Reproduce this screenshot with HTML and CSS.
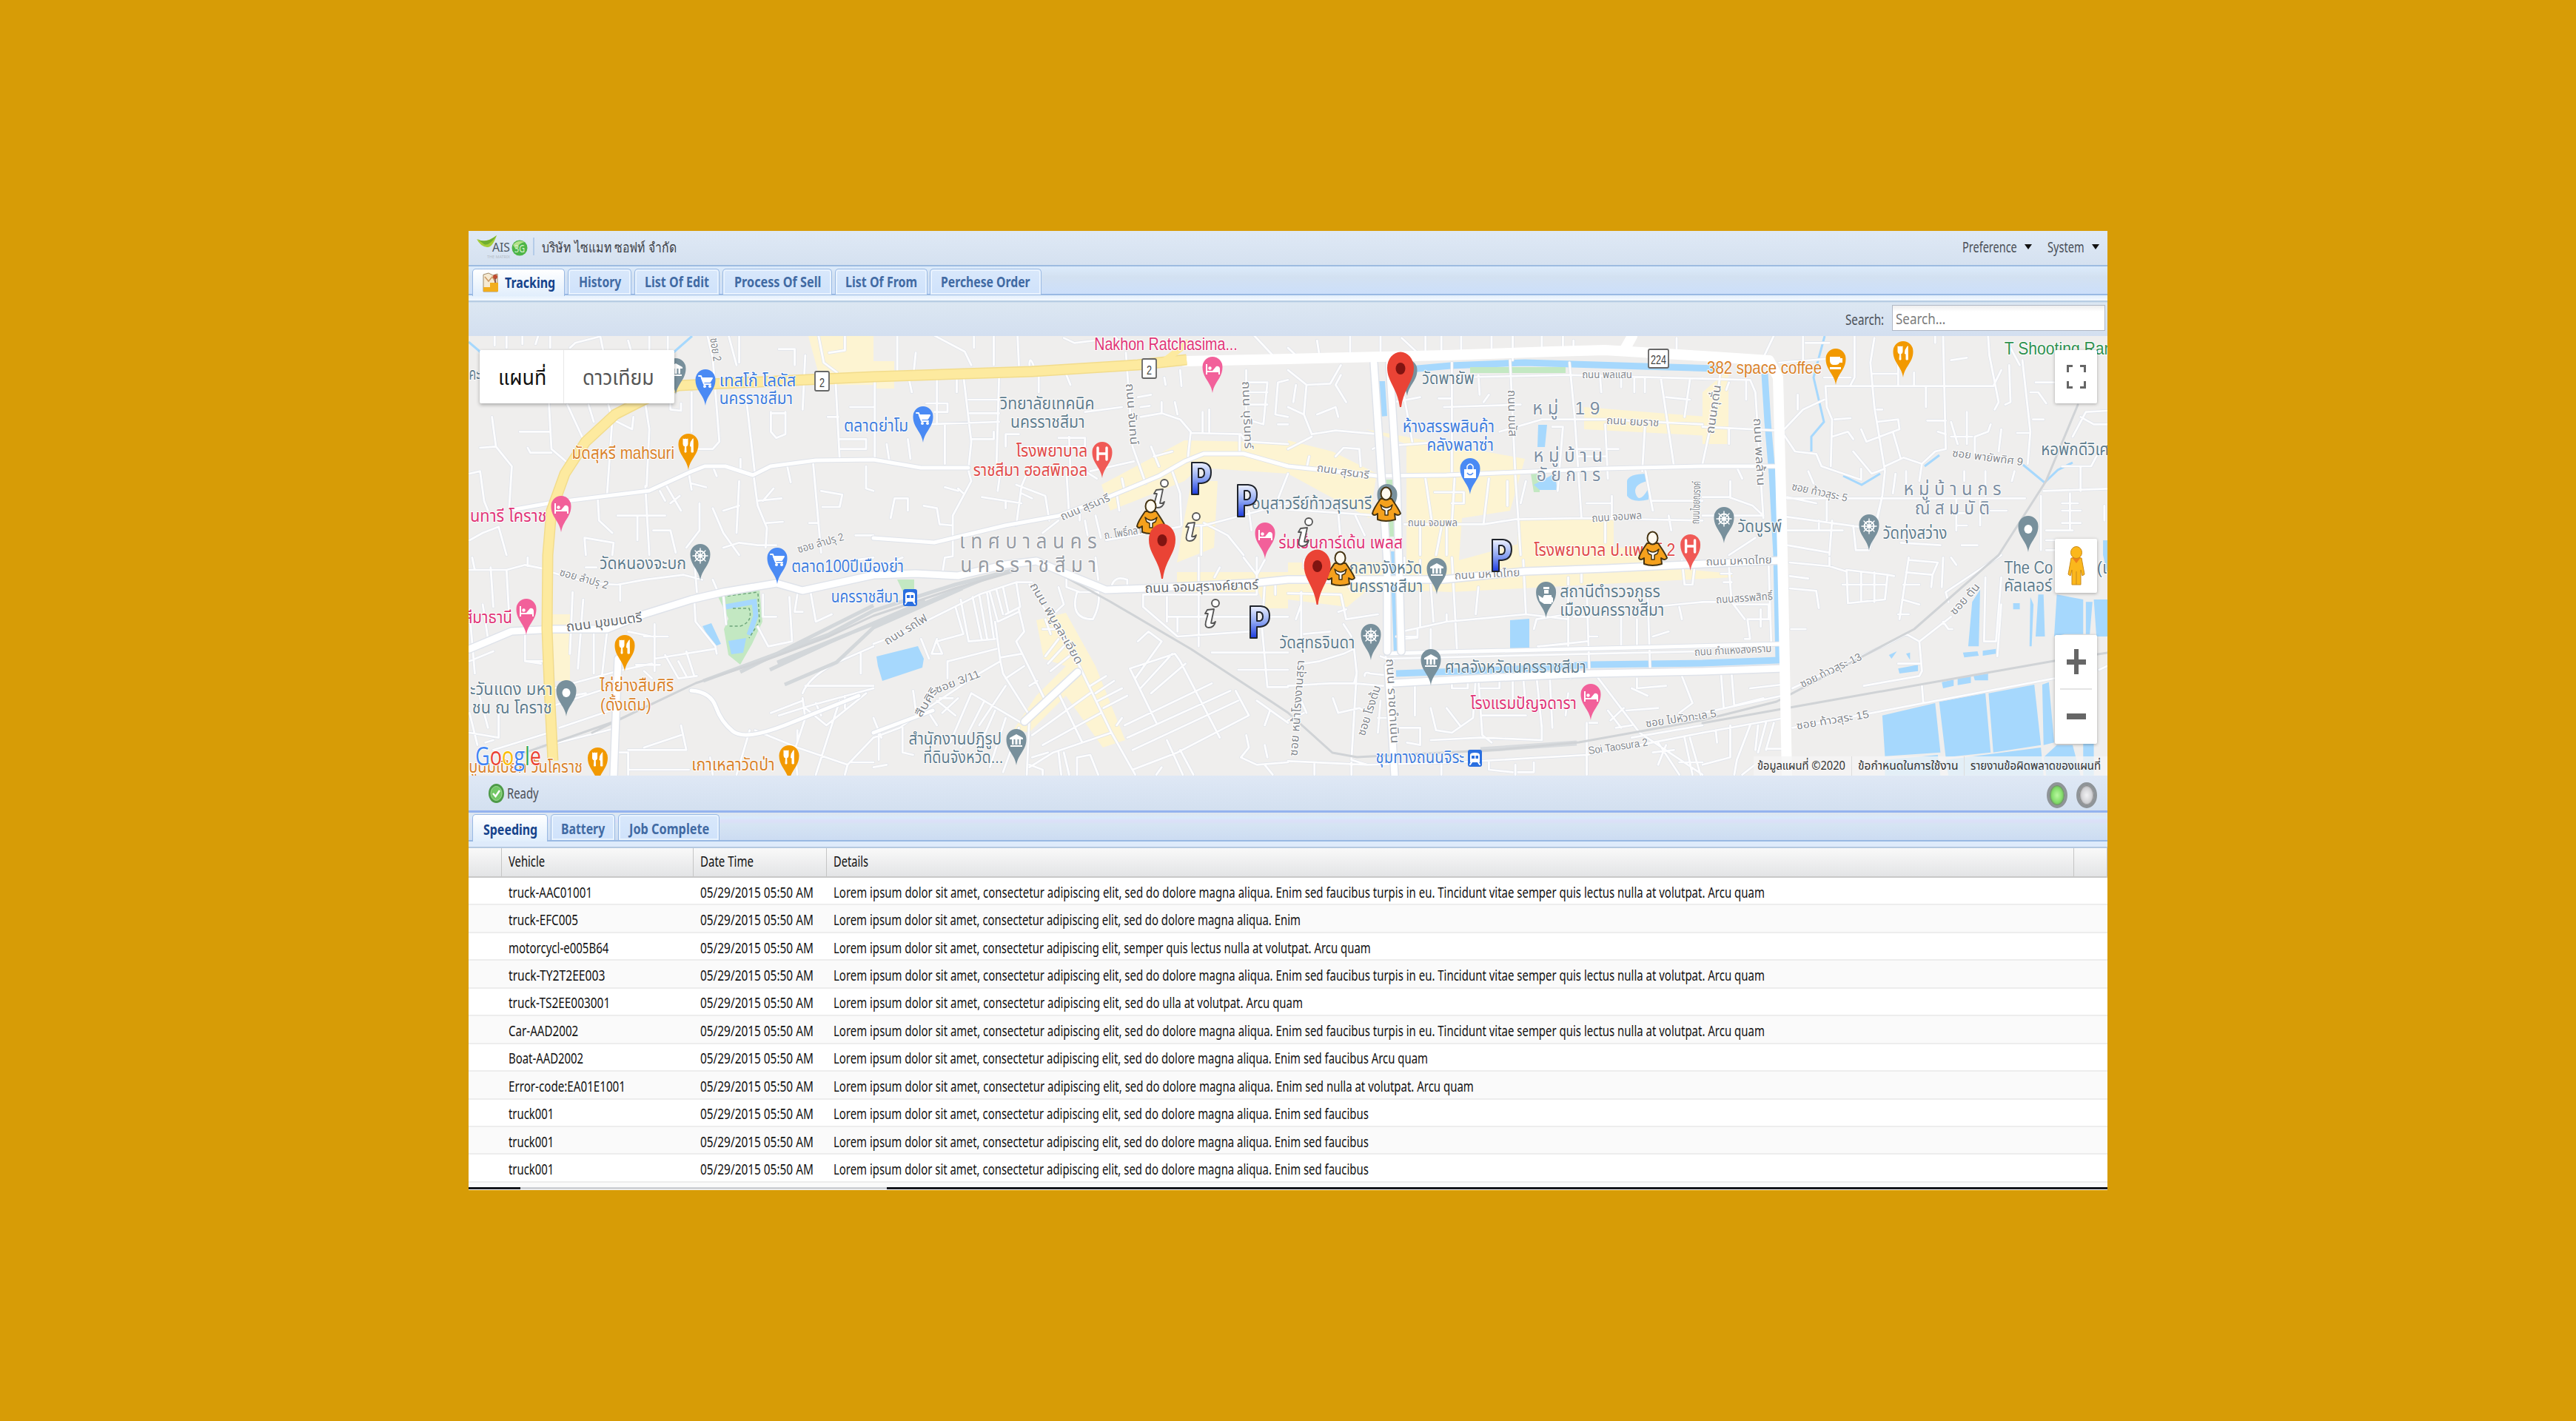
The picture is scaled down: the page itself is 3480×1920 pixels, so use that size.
FILE: index.html
```html
<!DOCTYPE html>
<html lang="th">
<head>
<meta charset="utf-8">
<title>Tracking</title>
<link rel="stylesheet" href="styles.css">
</head>
<body>
<main class="app">
  <header class="topbar">
    <svg class="logo" viewBox="0 0 70 34"><path d="M1 6Q12 13 28 1Q22 18 15 17Q6 16 1 6Z" fill="#a5cd3a"/><path d="M2 6Q14 13 28 1Q18 16 11 13Z" fill="#6fae2f"/><text x="22" y="23" font-size="16" textLength="24" lengthAdjust="spacingAndGlyphs" fill="#4b5560">AIS</text><ellipse cx="59" cy="18" rx="10.5" ry="10.5" fill="#4db548"/><path d="M50 14Q56 6 66 10Q58 11 54 20Z" fill="#b5e08c"/><text x="52" y="24" font-size="14" textLength="14" lengthAdjust="spacingAndGlyphs" fill="#d9f2cf">3G</text><text x="15" y="32" font-size="6" textLength="31" lengthAdjust="spacingAndGlyphs" fill="#b4bcc6">THE MATRIX</text></svg>
    <i class="sep"></i>
    <span class="company" data-w="182">บริษัท ไซแมท ซอฟท์ จำกัด</span>
    <span class="push"></span>
    <span class="menu"><span data-w="74">Preference</span><i class="caret"></i></span>
    <span class="menu"><span data-w="50">System</span><i class="caret"></i></span>
  </header>
  <nav class="tabs main-tabs">
    <a class="tab on t1"><svg class="ticon" viewBox="0 0 22 28"><path d="M1 3L8 1 14 4 20 2V26H1Z" fill="#f6ead2" stroke="#a08a68"/><path d="M1 20H10V14H21V26H1Z" fill="#f2ae1c"/><path d="M3 6L8 12 13 6 18 14" fill="none" stroke="#cc9a66" stroke-width="1.5"/><circle cx="17" cy="6" r="3" fill="#bf4b30"/><path d="M17 8V14" stroke="#744" stroke-width="1.5"/></svg><span data-w="68">Tracking</span></a>
    <a class="tab t2"><span data-w="57">History</span></a>
    <a class="tab t3"><span data-w="87">List Of Edit</span></a>
    <a class="tab t4"><span data-w="117">Process Of Sell</span></a>
    <a class="tab t5"><span data-w="97">List Of From</span></a>
    <a class="tab t6"><span data-w="121">Perchese Order</span></a>
  </nav>
  <div class="searchbar"><span data-w="52">Search:</span><div class="input"><span data-w="67">Search...</span></div></div>

  <section class="map">
  <svg class="canvas" viewBox="633 454 2214 594" preserveAspectRatio="none">
    <defs>
      <linearGradient id="pg" x1="0" y1="0" x2="0" y2="1"><stop offset="0" stop-color="#eef2ff"/><stop offset=".5" stop-color="#8ea6f2"/><stop offset="1" stop-color="#1c3be0"/></linearGradient>
      <path id="drop" d="M0 0C-2-15-13.5-20-13.5-35A13.5 14 0 0 1 13.5-35C13.5-20 2-15 0 0Z"/>
      <g id="bed" fill="#fff"><path d="M-9-39V-25H-7V-28H8V-25H10V-33Q9-37 5-36L0-30H-7V-39Z"/><circle cx="-3.500" cy="-33.500" r="2.200"/></g>
      <g id="fork"><path d="M-7-42V-35Q-7-32-4.500-32L-5-24H-3L-3.300-32Q-1-32-1-35V-42M-4-42V-34M6-42Q2-38 2.500-32H4V-24H6Z" fill="#fff" stroke="#fff" stroke-width="1"/></g>
      <g id="cart" fill="none" stroke="#fff" stroke-width="2"><path d="M-9-40H-6L-2-29H7"/><path d="M-5-37H9L6-32H-3Z" fill="#fff"/><circle cx="-1" cy="-26" r="1"/><circle cx="6" cy="-26" r="1"/></g>
      <g id="wheel" fill="none" stroke="#fff"><circle cy="-33" r="6.500" stroke-width="2"/><circle cy="-33" r="2" stroke-width="1.500"/><path d="M0-43V-23M-10-33H10M-7-40L7-26M7-40L-7-26" stroke-width="1.400"/></g>
      <g id="museum" fill="#fff"><path d="M-9-37L0-42 9-37V-35H-9ZM-8-27H8V-25H-8Z"/><path d="M-6-35H-3.500V-28H-6ZM-1.500-35H1.500V-28H-1.500ZM3.500-35H6V-28H3.500Z"/></g>
      <g id="aitch"><path d="M-6-41V-25M6-41V-25M-6-33H6" stroke="#fff" stroke-width="3.400"/></g>
      <g id="red"><path d="M-1 0C-4-25-18-34-18-53A18 21.500 0 0 1 18-53C18-34 4-25 1 0Z" fill="#ea4335"/><ellipse cy="-52" rx="6.500" ry="8" fill="#811411"/></g>
      <path id="pee" d="M2 2H16Q28 3 28 15 28 29 15 30H11V45H2ZM11 10V22H15Q19 21 19 16 19 11 15 10Z" fill="url(#pg)" fill-rule="evenodd" stroke="#20242c" stroke-width="2"/>
      <g id="eye" fill="#fff" stroke="#555" stroke-width="1.800"><path d="M6 15L15 14 11 33Q14 34 17 31 15 39 8 39 2 39 4 31L7 20H3Z"/><circle cx="17" cy="6" r="5"/></g>
      <g id="man" stroke="#463412" stroke-width="2"><path d="M12 17H27Q38 33 39 37 36 41 31 37L32 45Q19 49 8 45L8 37Q3 41 1 37 2 31 12 17Z" fill="#f5a11d"/><path d="M12 25Q20 33 28 25L26 31 22 33V39H18V33L14 31Z" fill="#fff" stroke-width="1.500"/><ellipse cx="19.500" cy="10" rx="7" ry="8.500" fill="#fffaf0"/></g>
      <g id="train"><rect x="0" y="0" width="19" height="23" rx="3" fill="#2a6fe0"/><path d="M3 7Q3 4 9.500 4T16 7V17H3Z" fill="#fff"/><path d="M5 8H9V12H5ZM10.500 8H14V12H10.500Z" fill="#2a6fe0"/><path d="M5 17L3 20M14 17L16 20" stroke="#fff" stroke-width="2"/></g>

      <g id="minor" fill="none">
        <g transform="translate(620 450) scale(.35714 .33333)"><path d="M135 10V50M180 10V60M240 10V45M300 10L290 45M345 10V60M440 40L530 15M440 40L420 60M535 15L545 68M640 30L650 68M720 10V68M790 10V68M940 10L960 100 985 440 960 470 905 470M1020 10L1050 130M1060 10V120M1085 250L1120 575M1180 320V400L1200 425 1235 410V320M1180 325H1235M1310 90L1300 310M1360 10L1380 120 1430 160M1425 200L1440 510M1395 340H1435M1440 430H1540V470H1440M880 240V400M800 285V310L840 315V285M125 340L140 460 200 540 190 710M80 465L140 460M340 280L350 470 410 525M230 400H345M260 465L270 485H350M410 290L470 430M490 290L510 360M565 290L580 350 655 390 660 340M580 350L560 660M705 285L720 390 710 620M705 620L720 900M40 570L80 560 95 680 110 720M40 840L90 810 150 785 180 900M525 670L530 760 580 810M600 740H780M675 740V840M480 900L475 830 585 850 580 900M760 640L780 680M780 610L840 720M800 690L835 660M735 800H800L820 890M910 690V800L860 870M960 710L1000 810 1060 900M1060 600L1050 810M1000 720L1060 700M1115 580L1130 700 1165 790 1160 870M1130 680L1220 670M1190 630L1150 680M1165 770L1225 765M1340 530L1370 890M1370 640L1450 655 1440 705H1375M1325 770H1360M870 570L880 635M880 610L935 625M960 540L975 580M1240 530L1255 605M1065 510V560M1130 860L1060 850 1000 870M1540 540V630L1568 640M1460 10V70L1400 80M1210 65H1270V130M1480 300H1568M1130 860H1200M1500 820H1568"/></g>
        <g transform="translate(1180 450) scale(.35714 .33333)"><path d="M90 10V180M230 10L345 75 370 130M160 80L150 180M135 190L145 240M5 200V510M240 190V370M340 170L370 440 360 545M475 180L465 545M190 370L475 360M360 270H475M365 325H475M370 430H455V400M200 285H280V320H230M50 450L60 520M130 430L140 510M270 370V530M315 190V240M625 170V240M730 170L745 210M380 10V60M455 10V130M545 10L550 130M590 130Q590 90 605 130M720 20L760 40 840 30M910 10L950 60M955 80L980 460 1030 610M1010 340L1090 325 1160 350 1200 400 1190 500M1200 405L1390 410 1410 440 1568 450M1090 325V280M1150 330L1140 280M1000 260L1050 250M1010 300L1045 295M1245 320V400M1270 310V400M1385 410V490M1410 150V350L1475 370 1490 200H1410M1410 240H1490M1410 290H1490M1440 10L1510 90M1568 190L1530 200 1520 330 1568 340M1100 180L1105 210M1160 150L1165 215M800 320L940 300M500 460V410H550M700 425H800V460H560M730 560L740 740M740 420L745 560M580 570L560 620 540 780M540 615L650 660 665 760M560 650L600 670M480 560L470 640M800 560L845 590M820 560L985 520M1060 500L1130 480M1050 460L1080 540M360 560L370 600 300 740 300 900M270 625L320 640M320 630L340 650M190 700L240 710 250 775 300 780M410 665L560 690M500 680V710M65 750L80 670H130V720M640 810L700 760M780 710V760M840 740L860 830M1130 560L1160 650 1165 780M1200 780H1250L1568 690M1240 780V900M1250 770L1340 820 1400 900M880 840L1160 785M920 650L930 720M1080 740L1100 900M940 590L950 640M1568 570L1520 700M1420 720L1430 800M800 760L810 820M1530 370H1568"/></g>
        <g transform="translate(1740 450) scale(.35714 .33333)"><path d="M110 30L120 100M235 10V80M0 60L30 90M350 10V90M430 20L490 80M520 10V80M580 10V80M655 10V80M770 10V80M850 10V110M960 10V60M1040 10V60M1080 30V60M1470 20V90M0 150L70 210 160 205 200 130M70 210L60 330 90 410 180 395 340 410M0 300L60 330M200 170L180 210 220 280M110 330L180 300 190 340M30 210L20 280M0 470L90 420M80 500L70 550M180 500L210 465 270 470 275 540M620 120V580M620 180L1060 170 1568 185M720 170L725 250M760 250L740 280M840 110L860 580 880 900M1065 120L1085 350M590 300L880 290M570 265H620M500 260L400 280M440 260L470 440M410 455L600 440M800 400L960 350 1200 350 1568 370M1180 170L1185 240M1260 170V220M1310 180V240M1350 180V240M1410 180L1460 540M1430 260L1520 270M1085 350L1110 750M1200 370L1210 590M1350 380L1340 560M1520 190L1500 340M1000 380H1040L1020 640M1090 470H1180M1210 470H1250M1350 545L1380 720M520 590L545 770M555 645H665V690H620M760 590L740 770M630 590L620 770M830 600V700M880 690L900 600M1130 690H1220M1225 660V750M1380 680H1568M440 775L740 775 860 755 1110 750 1568 760M190 730L200 850M0 715L340 740M255 740L290 820M500 780V900M580 790L560 900M1200 750V850M1440 740L1450 800M600 780V900M320 470L340 460M1100 500H1200"/></g>
        <g transform="translate(2300 450) scale(.35714 .33333)"><path d="M0 185L180 190 200 240 230 750M0 380L280 395M100 200L90 230M165 190V270M100 390V450M70 130L60 230 0 530M130 545L150 590M0 665H100L190 700 230 740H0M105 600V665M230 100L270 10M290 120L520 100M380 10V120M390 40H480M575 10V180L560 210M460 180H560M650 20L635 120 650 300 690 560 680 660 630 880M640 215H1100M465 215H640M465 215L470 300 490 350 485 540M460 270L380 310 300 400 350 480 430 490 450 540 600 595M600 595V550M740 120V210M800 160V210M640 165H740M845 215V300M910 10L920 470M850 355H920M890 400L920 410M1080 10L1085 90 1120 280 1105 310M1100 215L1130 150M1160 130L1165 280 1145 290M1210 110L1240 400 1230 530M1240 240H1270L1300 285M1260 200H1330M360 250V310M500 350L560 345M490 420L550 400 570 430M660 310H680M660 360L740 350 745 390 620 440 600 390M720 400L750 510M690 540L760 505 830 530 880 480 920 470M830 530L820 600M570 480L640 570 690 550M1000 320V450M940 360L965 450M940 420H1020M1090 370L1080 400 1030 420V500M1130 390L1120 480M1250 350H1290M1190 405H1240M320 670H1220M320 665L430 690M470 680V760M680 660L660 760M320 745L590 785M320 800H530M320 860L480 890M490 760L480 900M570 780L580 880H630M730 570L720 650M770 560V640M400 560L420 610M100 900L200 830M960 670V800M950 730H1010M990 560V600M1070 560V660M1090 720H1150M1050 680V780M960 780H1000M980 860H1040M750 850L900 860M1290 640L1568 630M1280 660V880M1390 650V800M1360 720H1430M1360 770H1430M1360 690H1420M1300 800H1400M1300 840H1400M1300 880H1400M1400 420L1450 320 1532 315M1430 340L1480 370H1530M1360 540L1470 540 1500 480M940 110L1000 100M1160 50L1200 130M1180 560L1170 600M440 760V800M880 10V40M1430 540V640M1520 700V760"/></g>
        <g transform="translate(620 750) scale(.35714 .33333)"><path d="M40 60H180L250 40 320 55M50 10L60 60M180 60L190 250M120 50L130 210M260 10V45M350 70L500 115 600 120 700 100 850 80 920 100M610 120V185M890 10L900 150M960 100L980 150M40 230L60 480M90 200L110 340M250 310V430L310 440M40 430L130 390M330 430H250M430 150L420 400M470 180L450 460M510 320V480M560 310L540 500M360 540L600 470 730 440M640 310L730 330M740 280V470M700 330H790M740 420L970 380M670 445H760M780 405L830 500 900 490M860 390L890 490M830 430L860 490M890 180L895 270 970 370 975 400M1000 160L1010 280M1150 160V250H1200M1250 170L1260 350 1170 370 1130 290M1280 160L1270 230H1300M1330 150L1350 270 1410 240M360 610L560 540M380 700L600 620M130 790L340 720M300 780L600 700M100 760L130 750M40 640L70 770M75 560L110 700M640 790H860L840 690M600 800H640V890M700 780L840 730M640 870H870M1100 710L1050 890M1120 710L1280 780 1470 850 1568 740M1470 850L1460 890M1300 580L1310 660 1270 790 1280 890M1310 620L1390 690 1540 560M1440 590L1350 890M1180 640L1300 590M1210 650L1330 610 1568 540M1300 560Q1320 500 1420 440L1568 370M1280 710V760M1500 20L1568 10M1480 840H1568M1460 570V620M1350 600L1370 650M950 820L960 890M1310 530H1568M1520 400V480M380 580L480 560M150 600V740L40 720M700 470L730 500M480 50H520"/></g>
        <g transform="translate(1180 750) scale(.35714 .33333)"><path d="M0 60L110 10M260 80L270 10 300 5M0 360L100 320 400 160 540 110 600 110M540 110L555 210 500 240M330 180L360 350 460 340M375 170L410 345M400 160L430 340M430 155L455 335M310 210L340 320 240 350 260 400H220L240 340M180 340L210 420M440 150L470 270M465 140L490 240M490 130L510 230M470 270L550 230M0 740L100 700 150 660 400 480 480 430M285 430L465 380M280 430V500M150 550L160 630M460 270L480 430 490 480 590 650M550 220L570 310 540 350 650 590M480 415L560 400M500 500L570 450M590 530L620 510M110 700V800L150 810M210 640L240 690M20 720L20 830M0 660L30 740M240 590L310 650M260 640L320 580M370 560L290 760M370 560L560 680M500 530L400 690M420 590L330 780M460 630L390 800M250 580H300M500 660L440 860M550 700L490 880M700 130L720 200 690 230M770 150Q740 260 830 260 860 200 850 150ZM730 90V130L780 150M590 120L770 430 900 720 990 890M650 260L670 320M640 300H700M650 410L700 340M660 440L720 370M670 470L740 410M700 560L790 760M600 730L820 560M640 770L860 640M590 860L680 800 900 720M650 590L590 650 580 890M820 530L880 490M840 560L910 510M850 590L940 540M870 620L960 570M920 690L940 660M970 460L1070 680M970 460L1140 400 1160 430 1310 740M1090 350L1040 310 1000 350M1050 560L1180 440M1010 540L1130 400M990 500L1090 350M950 690L1280 520M960 740L1350 550M980 790L1380 590M1370 550L1420 650 1150 800 980 870M1110 750L1170 890M1160 790L1210 890M1020 210V160H1450V10M1020 210L1150 330 1420 310M1110 250H1420M1110 170V270M1150 250V310M1230 10V370M1280 395H1568M1380 465H1568M1480 110L1470 300 1490 535H1568M1568 250H1490M900 130Q910 80 960 100V130M840 10L850 100M1390 820L1450 850 1568 840M1410 730L1420 780 1390 820M1480 770L1490 820M1450 590L1568 680M1500 630L1480 690M770 890V820L820 810 850 890M720 800L740 890M700 800L710 890M590 850L640 870V890M1480 850L1510 890M1520 120V160M1310 50L1290 90M1400 10L1450 80 1480 20M0 860L50 850M660 800L600 820M1070 890L1090 860"/></g>
        <g transform="translate(1740 750) scale(.35714 .33333)"><path d="M0 155L200 160 220 260 340 240M50 150V380M30 260L50 200M60 20V50M120 430L210 400 250 380M60 440L120 430M210 280L240 330M250 380L260 480 250 520 360 530M0 530L160 520 250 520M60 320L160 310M290 490Q290 470 310 480L400 490M350 410L400 430M370 190V420L1140 400 1568 390M410 330H490V300M500 20V290M540 120L550 270M430 310L600 270 900 240 1060 260M540 300V400M620 10L640 400M435 310V340L490 335M720 130L710 240M600 240V270M890 20L900 240M1060 160V370M1080 250H1140M945 370L1060 360M930 300L940 260 1060 240M1130 140L1140 480M1260 240V380M1320 260V380M1360 150L1370 470M1380 330L1440 310M1140 330H1170M950 390V370L1130 350M1490 20L1500 120H1530L1540 30M1380 210L1568 190M1480 210L1490 260M1060 90V120M1110 70V110M440 10V120M230 130L250 100M190 230L220 220M260 470L240 830M480 520V650M350 590L340 720M340 660H400M170 580L190 640 270 620 300 640M540 620L560 710 620 720 700 660 710 500M600 620L650 690M540 750L730 740 960 750V690M720 500L735 730 770 760M735 650H900M800 500V540M850 500V600M890 500L900 620M940 490L960 700M990 490L1000 700M1040 490L1070 500M1060 560L1050 650M620 510V540H680V510M730 540H800V510M1160 480L1330 720 1568 890M1130 680V890M1140 680H1170M1210 630L1260 700M1270 620L1220 670M1240 700L1300 690M1280 630L1400 620M1490 490L1530 600 1480 640M1320 500V540L1430 530M1300 540L1360 570M1400 760L1480 890M1380 800L1460 790M1430 770L1400 850M240 830L300 850 0 835M100 840V890M240 840V890M300 850L640 840 1130 810 1330 770 1568 720M580 850V890M760 840V870L850 880M860 850V890M930 840V880H870M420 700H500V770L450 760M1500 740L1530 890M1520 740L1560 890M0 670L60 640M50 590L70 640M1300 740L1568 690M400 800V890M1480 840H1568"/></g>
        <g transform="translate(2300 750) scale(.35714 .33333)"><path d="M0 190H50M100 50L110 190 160 260M70 75H110M80 110H110M120 200L180 200H250V260H170L180 340H160M220 220V290M250 40L260 360M330 30L480 45 540 65M480 45V10M545 60L700 80 690 180 550 195ZM530 120H690M600 70V190M650 70V190M700 80L725 85M330 85L400 95M330 135L430 145 440 215M335 300L390 300M780 10L745 260M760 120H820M755 180L820 200M740 240H780M780 20L890 30 870 80 770 70M870 80L865 130M910 10L905 130M940 10L960 40M770 320L820 350 830 470 820 490 610 530M820 350L940 250M910 270L930 300H945M1070 90L1065 350H1110L1130 90M1130 200L1115 410M920 150L1130 0M340 540L700 360 770 320M340 700L640 640 1330 500M740 440H820M830 530L835 600M0 470L300 460M70 480L80 620M110 480L120 610M180 540L300 525M120 610L230 580M0 720L310 660M50 710L55 760M105 690V820L0 850M180 690L130 830 120 890M210 690L200 790M240 680L210 800M270 680L240 790M240 785H310M1530 450L1500 465M210 840L150 890M0 640L300 570M920 150L930 190"/></g>
      </g>
      <g id="major" fill="none" stroke-linejoin="round">
        <path d="M691 689L741 680 820 670 877 663 934 637 952 630 980 630 1017 642 1041 630 1102 622 1180 621 1244 632 1308 632"/>
        <path d="M1180 727L1262 733 1358 710 1430 697 1501 670 1566 643 1601 623 1626 613 1680 613 1740 630 1861 643 1954 642 2047 638 2169 633 2300 630 2398 630"/>
        <path d="M934 933Q960 935 967 955T990 988 1060 980L1160 940M1180 990L1260 960M1873 883L2409 870"/>
      </g>
      <g id="big" fill="none" stroke-linejoin="round">
        <path d="M634 877L691 853 749 850 820 850 870 830 934 810 977 800 1049 788 1084 798 1180 777 1237 775 1294 778 1358 763 1400 758 1440 775 1494 797 1548 795 1701 787 1740 783 1950 783 2060 772 2170 768 2300 762 2409 757"/>
        <path d="M1856 490L1866 640 1874 760 1874 880M1877 490L1887 650 1893 880M1875 900L1884 1048M1883 923L1990 917 2150 910 2300 907 2409 903M835 890L829 1048M1384 975L1456 908"/>
      </g>
      <path id="white" fill="none" stroke-linejoin="round" d="M1600 488L1740 485 1954 480 2097 475 2168 473 2300 481 2390 487 2402 510 2408 750 2414 1048M2195 472L2205 454"/>
      <path id="rail" fill="none" d="M800 990L940 923 1031 893 1120 860 1180 832 1290 795 1370 772M1440 780L1500 813 1609 877 1716 947 1740 963 1800 1017 1833 1023 2025 1013 2133 1003 2300 973 2400 948 2586 850 2700 750 2764 650 2807 547M2300 977L2480 945 2775 893 2860 880M700 1020L830 975 940 923"/>
    </defs>
    <rect x="633" y="454" width="2214" height="594" fill="#efeeed"/>
    <g fill="#fdf4d2">
      <path d="M1092 454H1180V520H1110ZM1180 488H1208V525H1180ZM1488 655L1600 595 1740 598V640L1620 632 1600 650 1500 690ZM1610 650H1645L1640 740 1590 760 1600 700ZM1845 580L2060 620 2040 690 1975 700 1970 770 1900 780V600ZM1740 595L1800 610 1860 640 1850 700 1740 640ZM2140 550L2330 565V590L2140 580ZM1740 760H1960L2180 700V760L2340 775V780L1960 800 1850 795 1820 820 1740 810ZM1590 773H1740V800H1590ZM1400 838L1440 828 1480 900 1520 1000 1490 1010 1440 940 1390 990 1370 985 1400 940 1440 900 1410 890ZM2300 530L2335 500V600H2300ZM745 830H770V920H750ZM1700 800H1740V822H1710Z"/>
      <path d="M2050 700H2170V740H2230V770H2050Z"/>
    </g>
    <g fill="#c3e8c2">
      <path d="M970 806L1026 796 1030 840 1016 870 1000 898 984 885 978 850 984 836ZM1212 783H1235V800H1220ZM1868 648H1882L1884 725H1872ZM2068 640H2080V665H2072Z"/>
    </g>
    <path d="M980 820L1019 813 1021 832 1012 858" fill="none" stroke="#a6d8fd" stroke-width="7"/>
    <g fill="#a6d8fd">
      <path d="M984 866L1008 862 1004 882 988 884ZM949 846L961 842 974 870 964 874ZM1184 887L1240 873 1248 890 1246 902 1192 920 1186 900ZM1862 515H1871L1874 562 1864 563ZM2078 574H2090L2087 604H2077ZM2072 655L2100 640 2104 662H2080ZM2040 838L2066 836V878L2040 879ZM1878 745H1884L1889 880 1883 885Z"/>
      <path d="M2198 650Q2200 640 2225 640V650Q2205 655 2210 668T2227 660V675Q2205 680 2198 670Z"/>
      <g transform="translate(2300 750) scale(.35714 .33333)"><path d="M680 650L880 600 900 800 690 815ZM895 595L1070 560 1090 800 920 820ZM1082 560L1255 525 1280 770 1100 800ZM1285 525L1310 515 1330 760 1290 770ZM690 830L890 810 900 893H690ZM920 830L1280 780 1290 893H930ZM1290 820L1340 770H1400L1430 893H1300ZM1440 760H1480V893H1440ZM1020 190L1050 140 1045 370H1005ZM1175 195H1200V220H1175ZM1240 170L1252 200 1245 370H1237ZM1270 160H1290L1295 330H1260ZM1340 160L1440 180V320H1370L1330 330ZM1450 190H1475L1465 320H1450ZM1480 180H1532V330H1490ZM985 395L1040 390 1045 408 990 415ZM1060 388L1110 380V400L1060 408ZM905 515L950 505V530L910 540ZM965 500L1015 492V518L965 527ZM1025 490L1080 480V508H1030ZM740 460L815 445V470L745 480ZM705 405L735 390 715 420ZM770 400L785 395V425ZM1465 0V-40H1490V0ZM1515 0V-60H1532V80Z"/></g>
    </g>
    <path d="M1893 500L1960 494 2060 490 2220 495 2320 498M1886 910L2030 905 2150 898 2300 896 2403 892 2402 850 2400 750 2394 640 2388 570 2384 505" fill="none" stroke="#a6d8fd" stroke-width="9"/>
    <path d="M1986 500H2115" stroke="#c3e8c2" stroke-width="8"/>
    <path d="M633 462L660 485M910 476L935 454M2465 454L2450 510 2464 570 2447 590V610M2490 643L2515 655 2540 640M2600 630L2620 615M2733 628L2762 652 2780 635 2800 625" fill="none" stroke="#a6d8fd" stroke-width="3"/>
    <path d="M976 806L1024 800M990 822H1012Q1018 840 1000 846H985M1024 802L1026 840 1012 862" fill="none" stroke="#6fa57c" stroke-width="1.500" stroke-dasharray="4 3"/>
    <use href="#minor" stroke="#dfe3ea" stroke-width="12"/>
    <use href="#minor" stroke="#fdfdfe" stroke-width="8"/>
    <use href="#major" stroke="#dfe3ea" stroke-width="7"/>
    <use href="#major" stroke="#fff" stroke-width="5"/>
    <path d="M950 920L1031 890 1120 857 1180 825 1290 790 1370 770M1040 905L1120 868 1180 842 1250 812M1000 908L1180 818M1060 925L1130 895 1180 848 1300 795M1050 895L1200 835 1340 778" fill="none" stroke="#d3d7da" stroke-width="5"/>
    <path d="M2000 1013L2130 1004" stroke="#d8dbde" stroke-width="7"/>
    <use href="#rail" stroke="#d0d3d6" stroke-width="3"/>
    <use href="#big" stroke="#dfe3ea" stroke-width="12"/>
    <use href="#big" stroke="#fff" stroke-width="9"/>
    <use href="#white" stroke="#fff" stroke-width="14"/>
    <g fill="none" stroke-linejoin="round"><path d="M747 1028L743 950 739 850 740 750 745 690 763 640 791 597 831 560 870 540 916 521 1091 513 1180 509 1394 502 1537 493 1603 486" stroke="#f2dc8c" stroke-width="15"/><path d="M747 1028L743 950 739 850 740 750 745 690 763 640 791 597 831 560 870 540 916 521 1091 513 1180 509 1394 502 1537 493 1603 486" stroke="#fdea9f" stroke-width="12"/><path d="M1570 490L1606 462" stroke="#fdea9f" stroke-width="9"/></g>

    <g fill="#78909c"><use href="#drop" x="913" y="533"/><use href="#drop" x="1901" y="535"/><use href="#drop" x="1874" y="703"/><use href="#drop" x="2329" y="734"/><use href="#drop" x="2525" y="744"/><use href="#drop" x="2740" y="746"/><use href="#drop" x="946" y="784"/><use href="#drop" x="765" y="968"/><use href="#drop" x="1373" y="1034"/><use href="#drop" x="1941" y="803"/><use href="#drop" x="2088.600" y="835"/><use href="#drop" x="1852" y="892"/><use href="#drop" x="1933" y="926"/></g>
    <g fill="#f2609a"><use href="#drop" x="758" y="719"/><use href="#drop" x="1638" y="531"/><use href="#drop" x="1709" y="755"/><use href="#drop" x="711" y="858"/><use href="#drop" x="2149" y="973"/></g>
    <g fill="#f29900"><use href="#drop" x="930" y="635"/><use href="#drop" x="2480" y="520"/><use href="#drop" x="2571" y="510"/><use href="#drop" x="844" y="907"/><use href="#drop" x="807.500" y="1059"/><use href="#drop" x="1066" y="1056"/></g>
    <g fill="#4a8af4"><use href="#drop" x="953" y="548"/><use href="#drop" x="1247" y="598"/><use href="#drop" x="1986" y="668"/><use href="#drop" x="1050" y="789"/></g>
    <g fill="#f05a56"><use href="#drop" x="1489" y="646"/><use href="#drop" x="2283.600" y="771"/></g>
    <use href="#bed" x="758" y="719"/><use href="#bed" x="1638" y="531"/><use href="#bed" x="1709" y="755"/><use href="#bed" x="711" y="858"/><use href="#bed" x="2149" y="973"/>
    <use href="#fork" x="930" y="635"/><use href="#fork" x="2571" y="510"/><use href="#fork" x="844" y="907"/><use href="#fork" x="807.500" y="1059"/><use href="#fork" x="1066" y="1056"/>
    <use href="#cart" x="953" y="548"/><use href="#cart" x="1247" y="598"/><use href="#cart" x="1050" y="789"/>
    <use href="#wheel" x="2329" y="734"/><use href="#wheel" x="2525" y="744"/><use href="#wheel" x="946" y="784"/><use href="#wheel" x="1852" y="892"/>
    <use href="#museum" x="913" y="533"/><use href="#museum" x="1373" y="1034"/><use href="#museum" x="1941" y="803"/><use href="#museum" x="1933" y="926"/>
    <use href="#aitch" x="1489" y="646"/><use href="#aitch" x="2283.600" y="771"/>
    <g fill="#fff"><ellipse cx="2740" cy="715" rx="5.500" ry="6"/><ellipse cx="765" cy="936" rx="5.500" ry="6"/><path d="M1978 634H1994V646H1978Z"/><path d="M2472 482H2486V484H2489V490H2485Q2484 493 2480 493H2476Q2472 492 2472 487ZM2472 496H2487V499H2472Z"/><path d="M2085 793H2093V796H2085ZM2086 797H2092V802H2086ZM2078 804L2084 808 2086 804H2096V816H2086L2080 812ZM2098 808V814H2096V806Z"/></g>
    <path d="M1982 635V630Q1986 624 1990 630V635" fill="none" stroke="#fff" stroke-width="1.500"/><path d="M1982 639Q1986 644 1990 639" fill="none" stroke="#4a8af4" stroke-width="1.500"/>

    <g class="lbl" transform="translate(620 450) scale(.35714 .33333)">
      <text x="38" y="190" textLength="42" class="g">คะ</text>
      <text x="985" y="215" textLength="290" class="b">เทสโก้ โลตัส</text><text x="985" y="288" textLength="278" class="b">นครราชสีมา</text>
      <text x="1456" y="400" textLength="244" class="b">ตลาดย่าโม</text>
      <text x="427" y="510" textLength="388" class="o">มัดสุหรี mahsuri</text>
      <text x="42" y="765" textLength="290" class="p">นทารี โคราช</text>
      <text x="950" y="22" textLength="95" class="r" transform="rotate(82 950 22)">ซอย 2</text>
      <text x="1285" y="892" textLength="182" class="r" transform="rotate(-17 1285 892)">ซอย ลำปรุ 2</text>
    </g>
    <g class="lbl" transform="translate(1180 450) scale(.35714 .33333)">
      <text x="835" y="70" textLength="542" class="p">Nakhon Ratchasima...</text>
      <text x="478" y="308" textLength="358" class="g">วิทยาลัยเทคนิค</text><text x="518" y="385" textLength="282" class="g">นครราชสีมา</text>
      <text x="540" y="500" textLength="270" class="d">โรงพยาบาล</text><text x="377" y="578" textLength="433" class="d">ราชสีมา ฮอสพิทอล</text>
      <text x="1430" y="713" textLength="455" class="g">อนุสาวรีย์ท้าวสุรนารี</text>
      <text x="1532" y="872" textLength="470" class="p">ร่มเย็นการ์เด้น เพลส</text>
      <text x="325" y="872" textLength="520" class="c">เ ท ศ บ า ล น ค ร</text><text x="328" y="968" textLength="515" class="c">น ค ร ร า ช สี ม า</text>
      <text x="715" y="760" textLength="200" class="r" transform="rotate(-24 715 760)">ถนน สุรนารี</text>
      <text x="875" y="835" textLength="160" class="r" transform="rotate(-9 875 835)">ถ. โพธิ์กลาง</text>
      <text x="955" y="205" textLength="250" class="r" transform="rotate(86 955 205)">ถนน จันทน์</text>
      <text x="1395" y="195" textLength="275" class="r" transform="rotate(88 1395 195)">ถนน บุรินทร์</text>
    </g>
    <g class="lbl" transform="translate(1740 450) scale(.35714 .33333)">
      <text x="507" y="208" textLength="198" class="g">วัดพายัพ</text>
      <text x="433" y="402" textLength="348" class="b">ห้างสรรพสินค้า</text><text x="525" y="478" textLength="253" class="b">คลังพลาซ่า</text>
      <text x="925" y="330" textLength="98" class="v">ห มู่</text><text x="1085" y="330" textLength="95" class="v">1 9</text><text x="928" y="521" textLength="262" class="v">ห มู่ บ้ า น</text><text x="940" y="600" textLength="242" class="v">อั ย ก า ร</text>
      <text x="930" y="903" textLength="535" class="d">โรงพยาบาล ป.แพทย์ 2</text>
      <text x="1112" y="183" textLength="190" class="r">ถนน พลแสน</text>
      <text x="1203" y="368" textLength="200" class="r" transform="rotate(3 1203 368)">ถนน ยมราช</text>
      <text x="107" y="560" textLength="200" class="r" transform="rotate(9 107 560)">ถนน สุรนารี</text>
      <text x="453" y="783" textLength="188" class="r">ถนน จอมพล</text><text x="1150" y="766" textLength="190" class="r" transform="rotate(-4 1150 766)">ถนน จอมพล</text>
      <text x="832" y="230" textLength="190" class="r" transform="rotate(89 832 230)">ถนน มนัส</text>
      <text x="1555" y="775" textLength="175" class="r" transform="rotate(-88 1555 775)">ถนนไชยณรงค์</text>
    </g>
    <g class="lbl" transform="translate(2300 450) scale(.35714 .33333)">
      <text x="17" y="165" textLength="434" class="o">382 space coffee</text>
      <text x="1142" y="88" textLength="410" class="e">T Shooting Ran</text>
      <text x="1280" y="495" textLength="258" class="g">หอพักดีวิเศ</text>
      <text x="760" y="658" textLength="370" class="v">ห มู่ บ้ า น ก ร</text><text x="803" y="736" textLength="283" class="v">ณ์ ส ม บั ติ</text>
      <text x="132" y="806" textLength="168" class="g">วัดบูรพ์</text><text x="682" y="835" textLength="243" class="g">วัดทุ่งสว่าง</text>
      <text x="943" y="500" textLength="270" class="r" transform="rotate(8 943 500)">ซอย พายัพทิศ 9</text>
      <text x="335" y="635" textLength="215" class="r" transform="rotate(13 335 635)">ซอย ท้าวสุระ 5</text>
      <text x="42" y="410" textLength="200" class="r" transform="rotate(-82 42 410)">ถนนกุดั่น</text>
      <text x="193" y="345" textLength="275" class="r" transform="rotate(87 193 345)">ถนน พลล้าน</text>
    </g>
    <g class="lbl" transform="translate(620 750) scale(.35714 .33333)">
      <text x="532" y="56" textLength="328" class="g">วัดหนองจะบก</text>
      <text x="1258" y="70" textLength="425" class="b">ตลาด100ปีเมืองย่า</text>
      <text x="1408" y="191" textLength="255" class="b">นครราชสีมา</text>
      <text x="18" y="276" textLength="184" class="p">สีมาธานี</text>
      <text x="42" y="568" textLength="312" class="g">ะวันแดง มหา</text><text x="50" y="643" textLength="302" class="g">ชน ณ โคราช</text>
      <text x="533" y="553" textLength="280" class="o">ไก่ย่างสืบศิริ</text><text x="535" y="630" textLength="192" class="o">(ดั้งเดิม)</text>
      <text x="37" y="881" textLength="431" class="o">บูนมเปียก วันโคราช</text><text x="880" y="873" textLength="315" class="o">เกาเหลาวัดป่า</text>
      <text x="378" y="82" textLength="190" class="r" transform="rotate(17 378 82)">ซอย ลำปรุ 2</text>
      <text x="408" y="310" textLength="290" class="k" transform="rotate(-8 408 310)">ถนน มุขมนตรี</text>
    </g>
    <g class="lbl" transform="translate(1180 750) scale(.35714 .33333)">
      <text x="133" y="768" textLength="352" class="g">สำนักงานปฏิรูป</text><text x="188" y="843" textLength="303" class="g">ที่ดินจังหวัด...</text>
      <text x="1027" y="153" textLength="430" class="k" transform="rotate(-2 1027 153)">ถนน จอมสุรางค์ยาตร์</text>
      <text x="1535" y="378" textLength="286" class="g">วัดสุทธจินดา</text>
      <text x="52" y="365" textLength="185" class="r" transform="rotate(-33 52 365)">ถนน รถไฟ</text>
      <text x="180" y="660" textLength="130" class="r" transform="rotate(-60 180 660)">สืบศิริ</text><text x="240" y="560" textLength="180" class="r" transform="rotate(-22 240 560)">ซอย 3/11</text>
      <text x="590" y="122" textLength="370" class="r" transform="rotate(61 590 122)">ถนน พิบูลละเอียด</text>
    </g>
    <g class="lbl" transform="translate(1740 750) scale(.35714 .33333)">
      <text x="232" y="75" textLength="275" class="g">กลางจังหวัด</text><text x="232" y="150" textLength="278" class="g">นครราชสีมา</text>
      <text x="1028" y="171" textLength="380" class="g">สถานีตำรวจภูธร</text><text x="1028" y="245" textLength="395" class="g">เมืองนครราชสีมา</text>
      <text x="593" y="478" textLength="535" class="g">ศาลจังหวัดนครราชสีมา</text>
      <text x="690" y="623" textLength="402" class="p">โรงแรมปัญจดารา</text>
      <text x="332" y="843" textLength="335" class="b">ชุมทางถนนจิระ</text>
      <text x="630" y="98" textLength="248" class="r" transform="rotate(-3 630 98)">ถนน มหาดไทย</text>
      <text x="1138" y="808" textLength="228" class="r" transform="rotate(-9 1138 808)">Soi Taosura 2</text>
      <text x="1355" y="698" textLength="270" class="r" transform="rotate(-9 1355 698)">ซอย ไปหัวทะเล 5</text>
      <text x="35" y="815" textLength="390" class="r" transform="rotate(-86 35 815)">ซอย หน้าโรงงานสุรา</text>
      <text x="290" y="735" textLength="210" class="r" transform="rotate(-73 290 735)">ซอย โรงต้ม</text>
      <text x="372" y="420" textLength="345" class="r" transform="rotate(87 372 420)">ถนน ราชดำเนิน</text>
    </g>
    <g class="lbl" transform="translate(2300 750) scale(.35714 .33333)">
      <text x="1140" y="75" textLength="185" class="g">The Co</text><text x="1140" y="148" textLength="182" class="g">คัลเลอร์</text><text x="1492" y="75" textLength="38" class="g">(เ</text>
      <text x="13" y="42" textLength="250" class="r" transform="rotate(-2 13 42)">ถนน มหาดไทย</text>
      <text x="52" y="196" textLength="215" class="r" transform="rotate(-4 52 196)">ถนนสรรพสิทธิ์</text>
      <text x="-30" y="408" textLength="292" class="r" transform="rotate(-3 -30 408)">ถนน กำแหงสงคราม</text>
      <text x="378" y="538" textLength="255" class="r" transform="rotate(-27 378 538)">ซอย ท้าวสุระ 13</text>
      <text x="358" y="707" textLength="278" class="r" transform="rotate(-10 358 707)">ซอย ท้าวสุระ 15</text>
      <text x="955" y="245" textLength="150" class="r" transform="rotate(-50 955 245)">ซอย ตัน</text>
    </g>

    <use href="#train" x="1220" y="796"/><use href="#train" x="1983" y="1013"/>
    <g fill="#fff" stroke="#666" stroke-width="1.800"><rect x="1101" y="502" width="19" height="26" rx="2"/><rect x="1543" y="485" width="19" height="26" rx="2"/><rect x="2227" y="472" width="27" height="25" rx="2"/></g>
    <g font-family="Liberation Sans, sans-serif" font-size="17" fill="#444"><text x="1107" y="523" textLength="7" lengthAdjust="spacingAndGlyphs">2</text><text x="1549" y="506" textLength="7" lengthAdjust="spacingAndGlyphs">2</text><text x="2230" y="492" textLength="21" lengthAdjust="spacingAndGlyphs">224</text></g>

    <use href="#pee" x="1608" y="623"/><use href="#pee" x="1670" y="653"/><use href="#pee" x="2014" y="727"/><use href="#pee" x="1687" y="817"/>
    <use href="#eye" x="1556" y="647"/><use href="#eye" x="1599" y="692"/><use href="#eye" x="1751" y="699"/><use href="#eye" x="1625" y="809"/>
    <use href="#man" x="1535" y="674"/><use href="#man" x="1853" y="657"/><use href="#man" x="2213" y="717"/><use href="#man" x="1791" y="744"/>
    <use href="#red" x="1570" y="782"/><use href="#red" x="1892" y="550"/><use href="#red" x="1779.600" y="817"/>
    <g font-family="Open Sans, sans-serif" font-size="35" stroke="#fff" stroke-width="2" paint-order="stroke"><text x="642" y="1034" textLength="89" lengthAdjust="spacingAndGlyphs"><tspan fill="#4285f4">G</tspan><tspan fill="#ea4335">o</tspan><tspan fill="#fbbc05">o</tspan><tspan fill="#4285f4">g</tspan><tspan fill="#34a853">l</tspan><tspan fill="#ea4335">e</tspan></text></g>
  </svg>
    <div class="maptype"><b><span data-w="65">แผนที่</span></b><b class="sat"><span data-w="97">ดาวเทียม</span></b></div>
    <div class="ctl full"><svg viewBox="0 0 26 32"><path d="M1.500 10V1.500H8M18 1.500H24.500V10M24.500 22V30.500H18M8 30.500H1.500V22" fill="none" stroke="#666" stroke-width="3"/></svg></div>
    <div class="ctl peg"><svg viewBox="0 0 26 54"><path d="M6 16H20L24 38 21 40 19 32V52H7V32L5 40 2 38Z" fill="#fbb71c" stroke="#c98a1a"/><path d="M13 34V52" stroke="#c98a1a"/><path d="M7 15H19L13 23Z" fill="#ee7f1b"/><ellipse cx="13" cy="8.500" rx="7.500" ry="8" fill="#fbb71c" stroke="#c98a1a"/></svg></div>
    <div class="ctl zoom"><i class="plus"></i><i class="rule"></i><i class="minus"></i></div>
    <div class="credits"><span data-w="119">ข้อมูลแผนที่ ©2020</span><i></i><span data-w="135">ข้อกำหนดในการใช้งาน</span><i></i><span data-w="176">รายงานข้อผิดพลาดของแผนที่</span></div>
  </section>

  <div class="status">
    <svg class="ok" viewBox="0 0 21 26"><ellipse cx="10.500" cy="13" rx="10.500" ry="13" fill="#4d9a47"/><ellipse cx="10.500" cy="13" rx="7.500" ry="9.500" fill="#72c765" stroke="#a3dc98"/><path d="M6 13L9.500 17 15 9" fill="none" stroke="#fff" stroke-width="2.500"/></svg>
    <span data-w="43">Ready</span><span class="push"></span><i class="ball green"></i><i class="ball"></i>
  </div>
  <nav class="tabs sub-tabs">
    <a class="tab on s1"><span data-w="73">Speeding</span></a>
    <a class="tab s2"><span data-w="59">Battery</span></a>
    <a class="tab s3"><span data-w="108">Job Complete</span></a>
  </nav>
  <section class="grid">
    <div class="row head"><div></div><div><span data-w="49">Vehicle</span></div><div><span data-w="72">Date Time</span></div><div><span data-w="47">Details</span></div><div></div></div>
    <div id="rows"></div>
  </section>
  <footer class="scroll"><i></i></footer>
</main>
<script src="app.js"></script>
</body>
</html>
```
FILE: styles.css
```css
*{box-sizing:border-box}
body{margin:0;width:3480px;height:1920px;background:#d79c06;padding:312px 633px;overflow:hidden;font-family:"Noto Sans","Open Sans",sans-serif;font-size:19px;color:#4a4f57}
i{font-style:normal;display:block}
[data-w]{display:inline-block;white-space:nowrap;flex:none;height:26px;line-height:30px}
[data-w]>span{display:inline-block;transform-origin:0 50%;white-space:nowrap}
.main-tabs [data-w],.credits [data-w],.head [data-w]{line-height:26px}
.app{width:2214px;height:1296px;display:flex;flex-direction:column;background:#fff;overflow:hidden}
.push{flex:1}
.topbar{height:46px;flex:none;display:flex;align-items:center;background:linear-gradient(#dfe9f5,#d5e1f0);padding:0 11px 7px 10px}
.logo{width:70px;height:34px;margin-top:4px;font-family:"Noto Sans",sans-serif}
.sep{width:2px;height:24px;background:#b4cce8;margin:2px 10px 0 7px}
.company{color:#3c4046}
.menu{display:flex;align-items:center;margin-left:21px}
.caret{border:5px solid transparent;border-top:7px solid #111;border-bottom:0;margin:4px 0 0 10px}
.tabs{display:flex;align-items:flex-end;flex:none;font-weight:700;color:#416aa3;padding-left:5px;border-top:2px solid #9dbbe0}
.main-tabs{height:51px;padding-bottom:11px;background:linear-gradient(#dcebfb 0,#d3e1f1 14px,#ccdffa 37px,#99b9e3 37px,#99b9e3 39px,#e3effc 39px,#f4f9ff 46px,#b7cde3 46px,#b7cde3 48px,#e4eff6 49px)}
.sub-tabs{height:49px;padding-bottom:9px;border-top:3px solid #94b3ee;background:linear-gradient(#dfe6ee 0,#d9eafb 7px,#dcdff8 11px,#d6e4f3 16px,#ccdcf2 37px,#99b9e3 37px,#99b9e3 39px,#deebfb 39px,#deebfb 46px)}
.tab{display:flex;align-items:center;height:35px;border:1.500px solid #99b9e3;border-bottom:0;border-radius:5px 5px 0 0;background:linear-gradient(#d9e8fb,#cfe2fb);box-shadow:inset 0 0 0 2px #e9f3fe;justify-content:center;margin-right:4px}
.tab.on{background:linear-gradient(#fff,#e1eefc);color:#15428b;height:37px;margin-bottom:-2px;box-shadow:none}
.ticon{width:22px;height:28px;margin-right:8px}
.t1{width:125px}.t2{width:86px}.t3{width:115px}.t4{width:148px}.t5{width:125px;margin-right:3px}.t6{width:151px}
.s1{width:102px}.s2{width:87px}.s3{width:137px}
.searchbar{height:45px;flex:none;background:linear-gradient(#dce7f2,#d3dff0);display:flex;justify-content:flex-end;padding:3px 3px 0 0;gap:11px}
.searchbar>span{margin-top:5px}
.input{width:288px;height:35px;border:1.500px solid #b0b8c6;background:linear-gradient(#eee,#fff 8px);padding:3px 4px;color:#7b7b7b;line-height:0}
.map{height:594px;flex:none;position:relative;overflow:hidden;font-family:"Noto Sans Thai","Liberation Sans",sans-serif}
.canvas{width:2214px;height:594px;display:block}
.canvas use{stroke-linecap:round;stroke-linejoin:round}
.lbl text{font-family:"Liberation Sans","Noto Sans Thai",sans-serif;font-size:69px;stroke:#fff;stroke-width:6px;paint-order:stroke;stroke-linejoin:round}
.lbl .g{fill:#5f7d8e}.lbl .b{fill:#3f7ddd}.lbl .o{fill:#d9822b}.lbl .p{fill:#df3577}.lbl .d{fill:#e04a48}.lbl .e{fill:#2f9150}
.lbl .c{fill:#979ca4;font-size:86px}.lbl .v{fill:#7d8fa3;font-size:74px}
.lbl .r{fill:#84888e;font-size:44px}.lbl .k{fill:#666b71;font-size:54px}
.maptype{position:absolute;left:15px;top:19px;width:263px;height:72px;background:#fff;display:flex;box-shadow:0 2px 5px rgba(0,0,0,.3);border-radius:2px;font-size:28px}
.maptype b{font-weight:400;color:#111;width:113px;padding:17px 0 0 25px}
.maptype .sat{width:150px;color:#555;border-left:1px solid #e8e8e8}
.ctl{position:absolute;right:14px;width:57px;background:#fff;box-shadow:0 1px 4px rgba(0,0,0,.3);border-radius:2px;display:flex;flex-direction:column;align-items:center;justify-content:center}
.full{top:19px;height:72px}.full svg{width:26px;height:32px}
.peg{top:274px;height:73px}.peg svg{width:26px;height:54px}
.zoom{top:404px;height:147px;justify-content:flex-start;padding-top:19px}
.plus{width:26px;height:34px;background:linear-gradient(#666,#666) 50% 50%/6px 34px no-repeat,linear-gradient(#666,#666) 50% 50%/26px 7px no-repeat}
.rule{width:43px;height:2px;background:#e4e4e4;margin:19px 0 32px}
.minus{width:26px;height:8px;background:#666}
.credits{position:absolute;right:0;bottom:0;height:26px;padding:0 9px 0 5px;background:rgba(245,245,245,.78);display:flex;gap:8px;font-size:16px;color:#333}
.credits i{width:1px;background:#ddd}
.status{height:47px;flex:none;background:linear-gradient(#dfe8f5,#d3e0f0);display:flex;align-items:center;padding:0 14px 0 27px}
.status [data-w]{margin:-4px 0 0 4px}
.ok{width:21px;height:26px}
.ball{width:28px;height:35px;border-radius:50%;margin-left:12px;margin-top:6px;border:4px solid #8f9498;background:radial-gradient(#f2f2f4,#b4b4b8);box-shadow:inset 0 0 2px 1px #777}
.ball.green{background:radial-gradient(#b9f79f,#4dc436)}
.grid{height:460px;flex:none;overflow:hidden;color:#111}
.row{display:grid;grid-template-columns:45px 258.500px 180.500px 1685px 1fr;height:37.450px;border-bottom:2px solid #ededed;align-items:center}
.row:nth-child(even){background:#fafafa}
.row>div{padding-left:9px;height:26px}
.row.head{height:42px;background:linear-gradient(#f9f9f9,#e3e4e6);border-top:2px solid #b5c9e0;border-bottom:2px solid #c8c8c8}
.row.head>div{height:38px;padding-top:5px;border-right:1.500px solid #c5c5c5}
.scroll{height:3px;flex:none;background:#15171c;padding-left:70px}
.scroll i{width:495px;height:3px;background:#d0d2d6}
```
FILE: app.js
```js
const L = 'Lorem ipsum dolor sit amet, consectetur adipiscing elit, ';
const full = L + 'sed do dolore magna aliqua. Enim sed faucibus turpis in eu. Tincidunt vitae semper quis lectus nulla at volutpat. Arcu quam';
const short = L + 'sed do dolore magna aliqua. Enim sed faucibus';
const data = [
  ['truck-AAC01001', 113, full, 1258],
  ['truck-EFC005', 94, L + 'sed do dolore magna aliqua. Enim', 631],
  ['motorcycl-e005B64', 135, L + 'semper quis lectus nulla at volutpat. Arcu quam', 726],
  ['truck-TY2T2EE003', 130, full, 1258],
  ['truck-TS2EE003001', 137, L + 'sed do ulla at volutpat. Arcu quam', 634],
  ['Car-AAD2002', 94, full, 1258],
  ['Boat-AAD2002', 101, L + 'sed do dolore magna aliqua. Enim sed faucibus Arcu quam', 803],
  ['Error-code:EA01E1001', 158, L + 'sed do dolore magna aliqua. Enim sed nulla at volutpat. Arcu quam', 865],
  ['truck001', 61, short, 723],
  ['truck001', 61, short, 723],
  ['truck001', 61, short, 723],
  ['', 1, '', 1]
];
document.getElementById('rows').innerHTML = data.map(([v, vw, d, dw]) =>
  `<div class="row"><div></div><div><span data-w="${vw}">${v}</span></div><div>${v ? '<span data-w="153">05/29/2015 05:50 AM</span>' : ''}</div><div><span data-w="${dw}">${d}</span></div><div></div></div>`).join('');

document.querySelectorAll('[data-w]').forEach(el => {
  const w = +el.dataset.w, s = document.createElement('span');
  s.append(...el.childNodes);
  el.append(s);
  el.style.width = w + 'px';
  if (s.offsetWidth) s.style.transform = `scaleX(${w / s.offsetWidth})`;
});
document.querySelectorAll('.lbl text').forEach(t => t.setAttribute('lengthAdjust', 'spacingAndGlyphs'));
```
